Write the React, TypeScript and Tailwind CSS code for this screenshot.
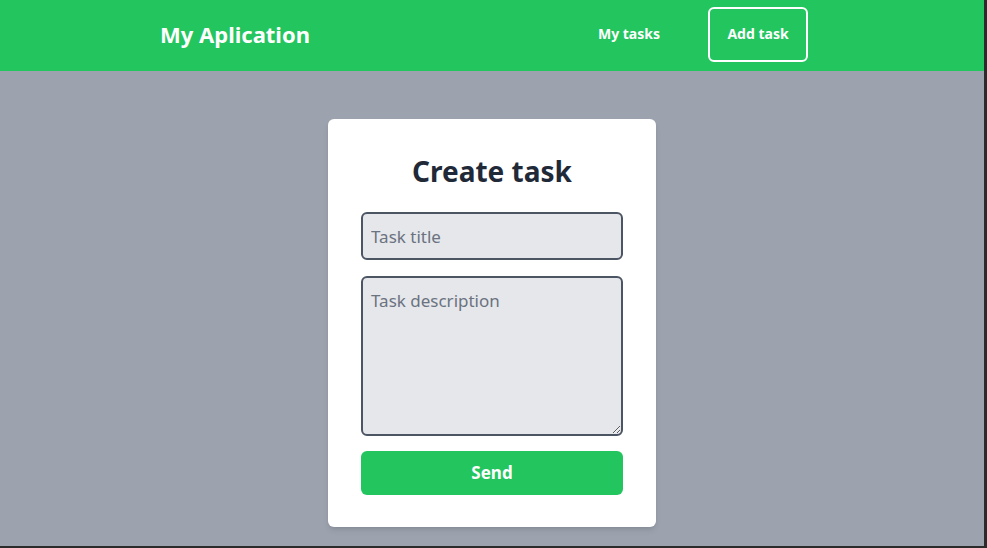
import React, { useState } from 'react'

const App = () => {
  const [title, setTitle] = useState('')
  const [description, setDescription] = useState('')

  return (
    <div className="w-[987px] h-[548px] bg-[#2b2b2b] overflow-hidden" style={{ fontFamily: '"Noto Sans", "Open Sans", sans-serif' }}>
      <div className="w-[984px] h-[546px] bg-[#9ca3af] flex flex-col">
        <nav className="h-[71px] bg-[#22c55e] shrink-0">
          <div className="ml-[160px] w-[648px] h-full flex items-center justify-between">
            <h1 className="text-[22px] leading-[30px] font-bold text-white mb-[4px]">My Aplication</h1>
            <ul className="flex items-center gap-12">
              <li className="text-[14px] font-bold text-white mb-[4px]">My tasks</li>
              <li>
                <button className="w-[100px] h-[55px] mb-[3px] pb-[2px] border-2 border-white rounded-md text-[14px] font-bold text-white">
                  Add task
                </button>
              </li>
            </ul>
          </div>
        </nav>

        <div className="flex justify-center mt-12">
          <form
            onSubmit={(e) => e.preventDefault()}
            className="w-[328px] bg-white rounded-md shadow-md px-[33px] pt-[32px] pb-[32px] flex flex-col"
          >
            <h2 className="text-[28px] leading-[40px] font-bold text-[#1f2937] text-center mb-[21px]">
              Create task
            </h2>
            <input
              value={title}
              onChange={(e) => setTitle(e.target.value)}
              type="text"
              placeholder="Task title"
              className="h-[48px] w-full bg-[#e5e7eb] border-2 border-[#4b5563] rounded-md px-2 text-[17px] text-[#1f2937] placeholder-[#6b7280] outline-none"
            />
            <textarea
              value={description}
              onChange={(e) => setDescription(e.target.value)}
              placeholder="Task description"
              className="mt-4 h-[160px] w-full bg-[#e5e7eb] border-2 border-[#4b5563] rounded-md px-2 py-[10px] text-[17px] text-[#1f2937] placeholder-[#6b7280] outline-none"
            />
            <button className="mt-[15px] h-[44px] w-full bg-[#22c55e] rounded-md text-white font-bold text-[17px]">
              Send
            </button>
          </form>
        </div>
      </div>
    </div>
  )
}

export default App
